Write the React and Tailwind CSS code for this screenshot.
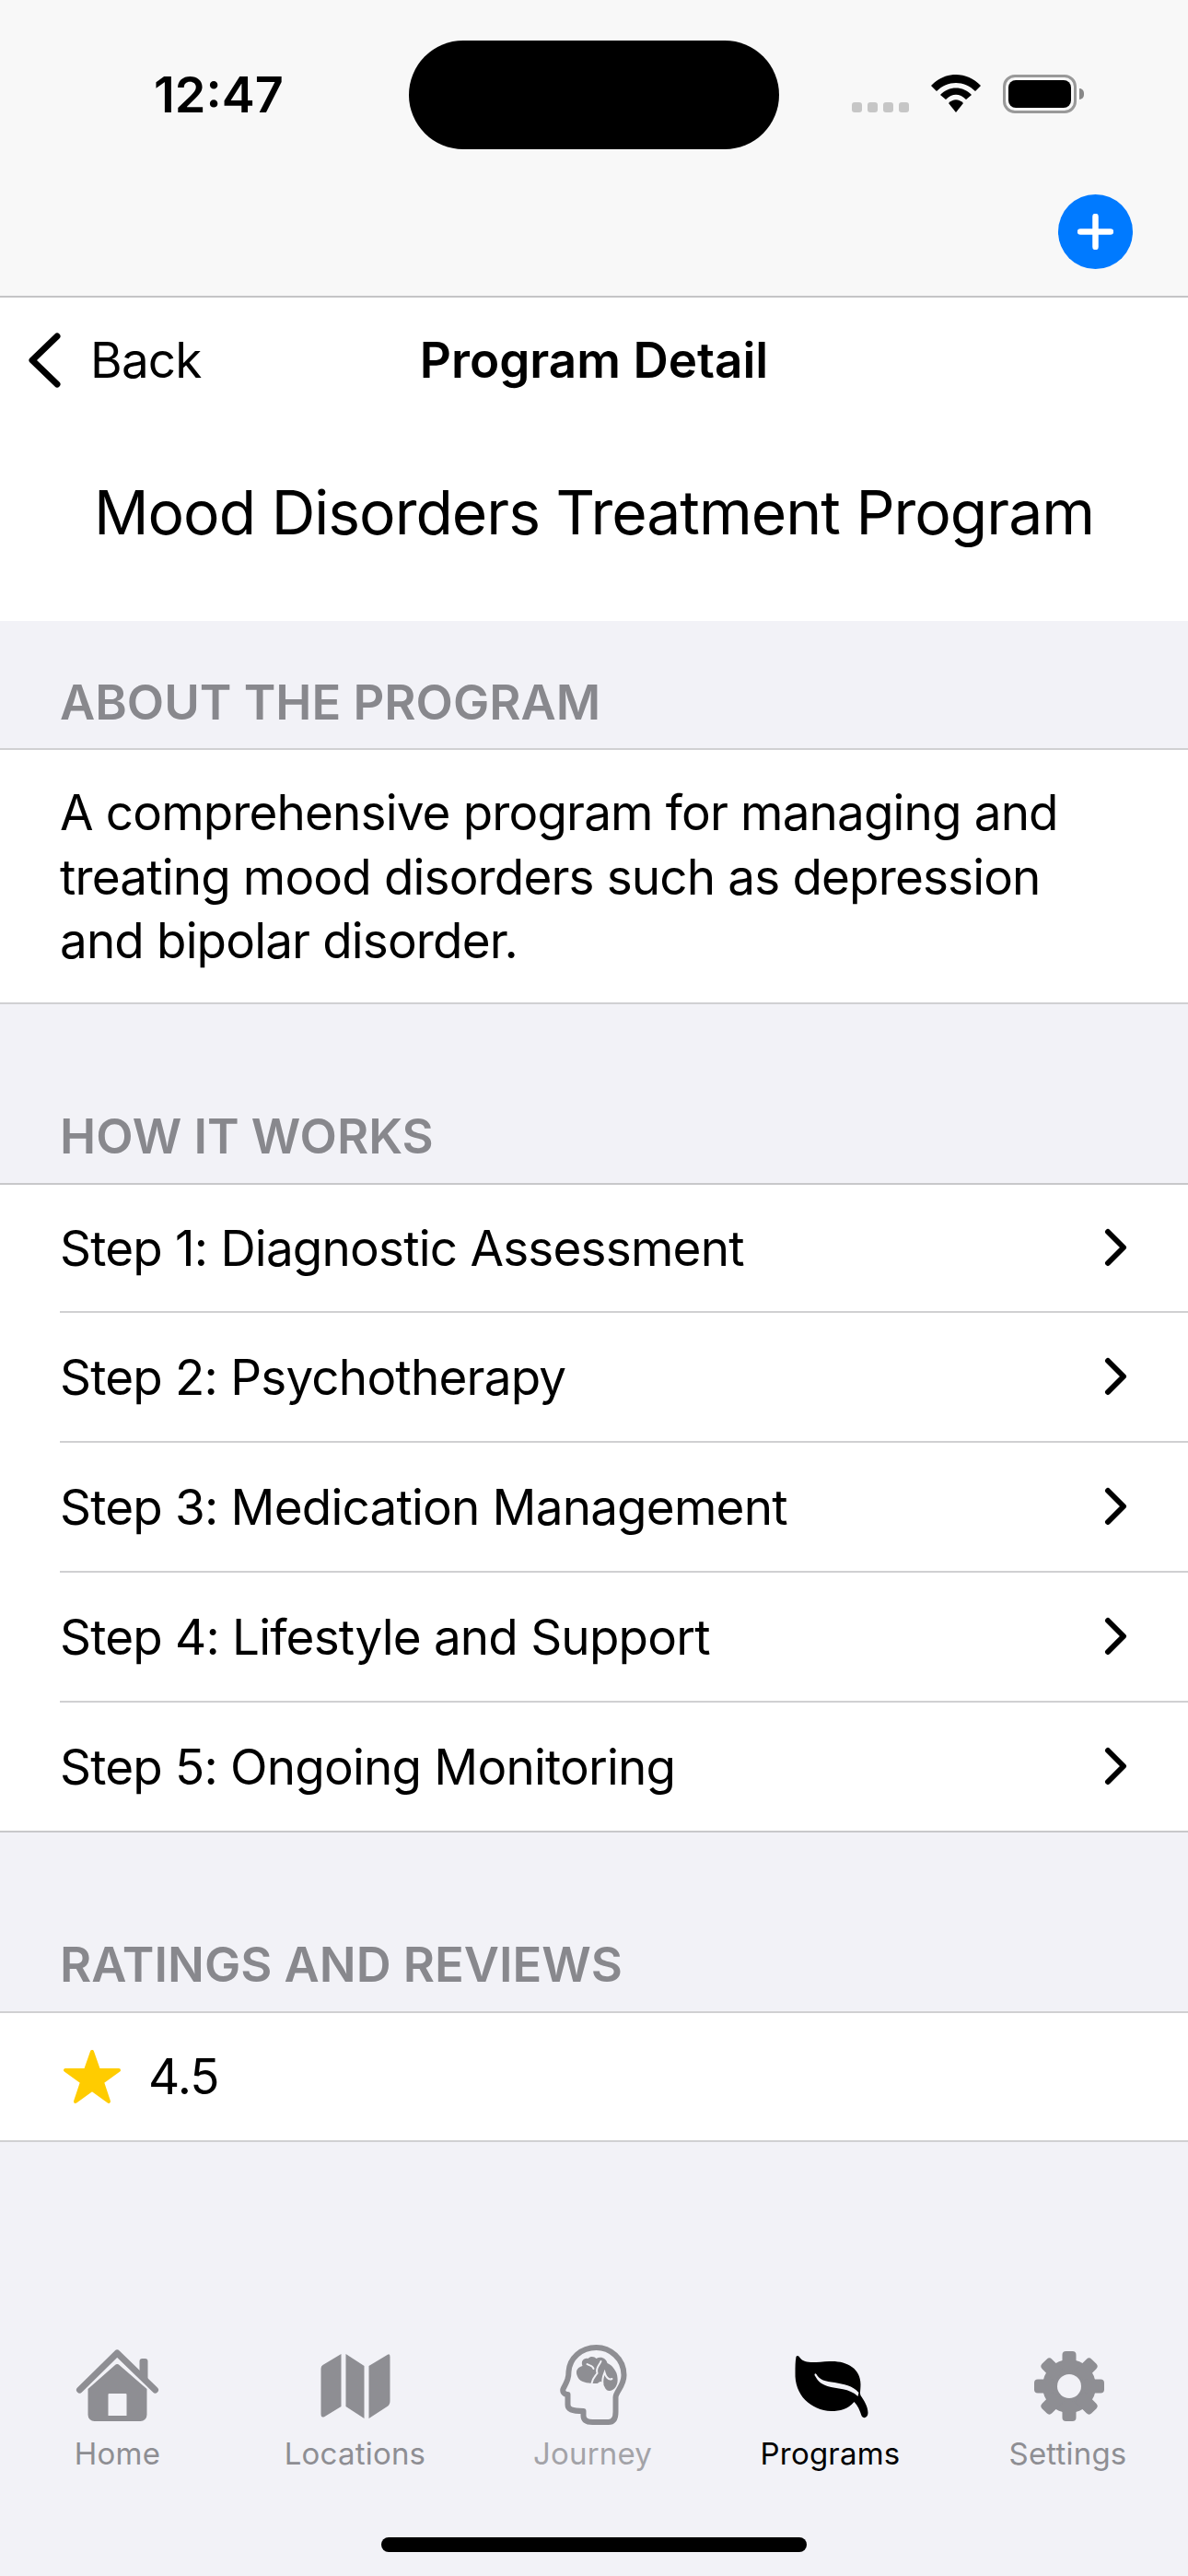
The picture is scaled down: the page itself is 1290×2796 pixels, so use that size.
import { useMemo } from 'react'

const FONT = 'font-["Inter","Noto_Sans",sans-serif]'

const steps = [
  'Step 1: Diagnostic Assessment',
  'Step 2: Psychotherapy',
  'Step 3: Medication Management',
  'Step 4: Lifestyle and Support',
  'Step 5: Ongoing Monitoring',
]

function HomeIcon() {
  return (
    <svg width="100" height="90" viewBox="77.5 2545 100 90" fill="#8e8e93">
      <path d="M151 2578 V2563 a3 3 0 0 1 3 -3 h3 a3 3 0 0 1 3 3 V2585 Z" />
      <path d="M86 2588 L126.7 2548 L168 2588" fill="none" stroke="#8e8e93" strokeWidth="7" strokeLinecap="round" strokeLinejoin="round" transform="translate(0 6)" />
      <path fillRule="evenodd" d="M95 2593 L124.5 2567 a3 3 0 0 1 4.5 0 L159 2593 V2621 a7 7 0 0 1 -7 7 H102 a7 7 0 0 1 -7 -7 Z M117 2599 a1 1 0 0 1 1 -1 H136 a1 1 0 0 1 1 1 V2622 H117 Z" />
    </svg>
  )
}

function MapIcon() {
  return (
    <svg width="100" height="90" viewBox="335.5 2545 100 90" fill="#8e8e93">
      <path d="M370 2555 V2612 L352 2623 Q348 2625 348 2620 V2571 Q348 2568 350 2567 Z" />
      <path d="M375 2555 L395 2568 V2625 L375 2612 Z" />
      <path d="M400 2568 L420 2556 Q423 2554 423 2558 V2606 Q423 2610 420 2612 L400 2625 Z" />
    </svg>
  )
}

function HeadIcon() {
  return (
    <svg width="100" height="90" viewBox="593.5 2545 100 90">
      <g transform="translate(540 2530)">
        <path
          d="M128 88 L128 72 C128 66 137 60 137 48 C137 30 122 18 107 18 C90 18 78 30 77 44 C77 52 75 55 71 63 C70 66 72 69 76 69 L76 80 C76 85 80 87 93 87 L93 92 C93 97 97 99 103 99 L120 99 C125 99 128 96 128 88 Z"
          fill="none"
          stroke="#8e8e93"
          strokeWidth="6"
          strokeLinejoin="round"
        />
        <path
          d="M86 48 C84 42 88 39 92 38 C90 33 93 29 98 30 C101 27 105 28 107 30 C112 27 118 30 119 35 C124 37 130 44 130 51 C131 58 127 65 121 65 C117 65 116 60 114 57 C112 53 110 56 108 57 L102 57 C94 56 88 55 86 48 Z"
          fill="#8e8e93"
        />
        <path d="M97 36 C100 38 103 37 104 41 M112 33 C110 38 106 40 108 46 C105 50 103 51 102 57 M124 52 C120 54 117 49 116 45 C114 50 113 53 114 58" fill="none" stroke="#f2f2f7" strokeWidth="2" strokeLinecap="round" />
      </g>
    </svg>
  )
}

function LeafIcon() {
  return (
    <svg width="100" height="90" viewBox="851.5 2545 100 90">
      <path
        fillRule="evenodd"
        fill="#000"
        d="M864 2558 C865 2556 867 2557 868 2559 C873 2566 884 2564 900 2563 C918 2562 934 2570 934 2588 C934 2594 933 2597 934 2600 C938 2606 942 2612 942 2619 C942 2624 937 2626 935 2622 C933 2616 931 2611 927 2607 C920 2615 912 2617 902 2617 C880 2616 862 2600 863 2575 C863 2569 863 2563 864 2558 Z M884 2578 C887 2583 889 2587 898 2590 C908 2593 922 2592 931 2601 L932 2597 C925 2589 916 2588 906 2586 C896 2585 889 2583 886 2577 C885 2576 884 2576 884 2578 Z"
      />
    </svg>
  )
}

function GearIcon() {
  const teeth = useMemo(() => [0, 45, 90, 135, 180, 225, 270, 315], [])
  return (
    <svg width="100" height="90" viewBox="1109.5 2545 100 90" fill="#8e8e93">
      <circle cx="1160.5" cy="2590" r="29" />
      {teeth.map(a => (
        <rect key={a} x="1153" y="2552" width="15" height="22" rx="4" transform={`rotate(${a} 1160.5 2590)`} />
      ))}
      <circle cx="1160.5" cy="2590" r="13" fill="#f2f2f7" />
    </svg>
  )
}

function Tab({ icon, label, className }) {
  return (
    <div className="flex flex-col items-center">
      {icon}
      <span className={`mt-[8px] h-[40px] text-[33px] leading-[40px] tracking-[0.2px] ${className}`}>{label}</span>
    </div>
  )
}

function SectionHeader({ children, className }) {
  return (
    <div className={`flex shrink-0 items-end pl-[65px] ${className}`}>
      <span className="text-[52.5px] leading-[60px] font-semibold text-[#88888d]">{children}</span>
    </div>
  )
}

function Chevron() {
  return (
    <svg width="27" height="42" viewBox="0 0 27 42" fill="none" stroke="#000" strokeWidth="6" strokeLinecap="round" strokeLinejoin="round">
      <path d="M5 4 L22 21 L5 38" />
    </svg>
  )
}

export default function App() {
  return (
    <div className={`flex h-[2796px] w-[1290px] flex-col overflow-hidden bg-[#f2f2f7] text-black ${FONT}`}>
      {/* status + toolbar */}
      <div className="h-[323px] shrink-0 border-b-2 border-[#c4c4c6] bg-[#f8f8f8]">
        <div className="flex pt-[44px]">
          <div className="w-[444px] pl-[167px] pt-[27px] text-[54px] font-semibold leading-[64px]">12:47</div>
          <div className="h-[118px] w-[402px] rounded-full bg-black" />
          <div className="flex items-start pl-[79px] pt-[37px]">
            <div className="mt-[30px] flex gap-[6px]">
              {[0, 1, 2, 3].map(i => <div key={i} className="h-[11px] w-[11px] rounded-[3px] bg-[#c6c6c6]" />)}
            </div>
            <svg className="ml-[24px]" width="54" height="41" viewBox="0 0 54 41" fill="#000">
              <path d="M0 12 C15 -4 39 -4 54 12 L48 18 C36 6 18 6 6 18 Z" />
              <path d="M10 22 C19 12 35 12 44 22 L38 27 C31 20 23 20 16 27 Z" />
              <path d="M19 31 C24 26 30 26 35 31 L27 41 Z" />
            </svg>
            <div className="ml-[24px] flex items-center">
              <div className="h-[42px] w-[80px] rounded-[13px] border-[3px] border-[#999] p-[3px]">
                <div className="h-full w-full rounded-[8px] bg-black" />
              </div>
              <div className="ml-[3px] h-[12px] w-[5px] rounded-r-full bg-[#888]" />
            </div>
          </div>
        </div>
        <div className="flex justify-end pr-[60px] pt-[49px]">
          <div className="flex h-[81px] w-[81px] items-center justify-center rounded-full bg-[#007aff]">
            <svg width="39" height="39" viewBox="0 0 39 39" stroke="#fff" strokeWidth="6.5" strokeLinecap="round">
              <path d="M19.5 3 V36 M3 19.5 H36" />
            </svg>
          </div>
        </div>
      </div>

      {/* nav */}
      <div className="relative flex h-[136px] shrink-0 items-center justify-center bg-white">
        <div className="absolute left-[30px] flex items-center">
          <svg width="36" height="60" viewBox="0 0 36 60" fill="none" stroke="#000" strokeWidth="7" strokeLinecap="round" strokeLinejoin="round">
            <path d="M32 4 L5 30 L32 56" />
          </svg>
          <span className="ml-[32px] text-[53px] leading-[60px] tracking-[-0.8px]">Back</span>
        </div>
        <span className="text-[53px] font-semibold leading-[60px]">Program Detail</span>
      </div>
      <div className="flex h-[215px] shrink-0 justify-center bg-white pt-[66px]">
        <span className="text-[66px] leading-[62px] tracking-[-1px]">Mood Disorders Treatment Program</span>
      </div>

      <SectionHeader className="h-[138px] pb-[20px]">ABOUT THE PROGRAM</SectionHeader>
      <div className="shrink-0 border-y-2 border-[#d0d0d2] bg-white pb-[31px] pl-[65px] pr-[100px] pt-[34px] text-[53px] leading-[69.6px] tracking-[-0.85px]">
        A comprehensive program for managing and treating mood disorders such as depression and bipolar disorder.
      </div>

      <SectionHeader className="h-[194px] pb-[21px]">HOW IT WORKS</SectionHeader>
      <div className="shrink-0 border-y-2 border-[#c8c8ca] bg-white pl-[65px]">
        {steps.map((s, i) => (
          <div
            key={s}
            className={`flex items-center justify-between pr-[65px] ${i === 0 || i === steps.length - 1 ? 'h-[139px]' : 'h-[141px]'} ${i < steps.length - 1 ? 'border-b-2 border-[#d0d0d2]' : ''}`}
          >
            <span className="pt-[2px] text-[53px] leading-[60px] tracking-[-0.8px]">{s}</span>
            <Chevron />
          </div>
        ))}
      </div>

      <SectionHeader className="h-[194px] pb-[21px]">RATINGS AND REVIEWS</SectionHeader>
      <div className="flex h-[142px] shrink-0 items-center border-y-2 border-[#d0d0d2] bg-white pl-[68px]">
        <svg width="64" height="60" viewBox="0 0 64 60" fill="#ffcc00" stroke="#ffcc00" strokeWidth="4" strokeLinejoin="round">
          <path d="M32 3 L39 23 L61 23 L43 36 L50 57 L32 44 L14 57 L21 36 L3 23 L25 23 Z" />
        </svg>
        <span className="ml-[29px] text-[53px] leading-[60px] tracking-[-0.8px]">4.5</span>
      </div>

      {/* tab bar */}
      <div className="mt-auto grid grid-cols-[repeat(5,258px)] -ml-[1.5px]">
        <Tab icon={<HomeIcon />} label="Home" className="text-[#8e8e93]" />
        <Tab icon={<MapIcon />} label="Locations" className="text-[#8e8e93]" />
        <Tab icon={<HeadIcon />} label="Journey" className="text-[#a3a3a8]" />
        <Tab icon={<LeafIcon />} label="Programs" className="text-black" />
        <Tab icon={<GearIcon />} label="Settings" className="text-[#8e8e93]" />
      </div>
      <div className="mb-[26px] mt-[71px] flex justify-center">
        <div className="h-[16px] w-[462px] rounded-full bg-black" />
      </div>
    </div>
  )
}
